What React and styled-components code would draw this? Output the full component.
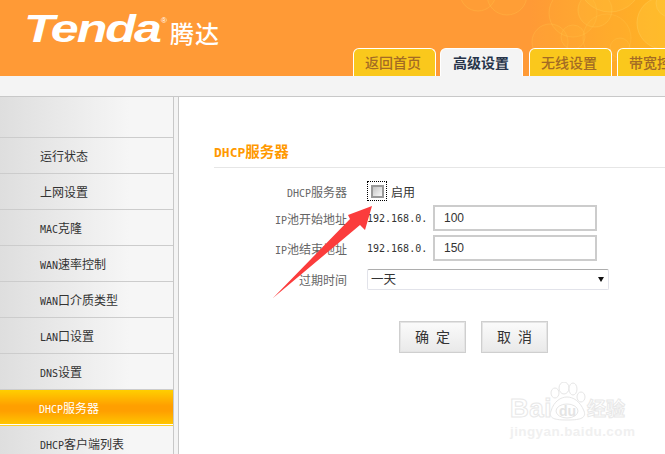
import React from 'react'
import styled, { createGlobalStyle } from 'styled-components'

const CJK = `"Liberation Sans", "Noto Sans CJK SC", sans-serif`

const GlobalStyle = createGlobalStyle`
  html, body {
    margin: 0;
    padding: 0;
    background: #fff;
    overflow: hidden;
  }
  * { box-sizing: border-box; }
`

const Page = styled.div`
  position: relative;
  width: 665px;
  height: 454px;
  overflow: hidden;
  background: #f4f4f4;
  font-family: ${CJK};
  font-size: 12px;
  color: #333;
`

const Header = styled.header`
  position: relative;
  display: flex;
  align-items: flex-end;
  height: 76px;
  padding-left: 353px;
  background: linear-gradient(90deg, #ff9a36 0, #ff9a36 530px, #ffab2a 620px, #ffb522 665px);
`

const Bubbles = styled.svg`
  position: absolute;
  left: 0;
  top: 0;
`

const Logo = styled.div`
  position: absolute;
  left: 24px;
  top: 8px;
  display: flex;
  align-items: flex-start;
  color: #fff;
`

const LogoWord = styled.span`
  display: block;
  width: 137px;
  font: italic bold 38px/42px "Liberation Sans", sans-serif;
  letter-spacing: -1.5px;
  transform: scaleX(1.32);
  transform-origin: left;
`

const LogoMark = styled.span`
  font: 8px/10px "Liberation Sans", sans-serif;
  margin-top: 8px;
`

const LogoCn = styled.span`
  font: 500 24px/28px "Noto Sans CJK SC", sans-serif;
  margin: 11px 0 0 3px;
  letter-spacing: 1px;
`

const Tabs = styled.nav`
  position: relative;
  display: flex;
  gap: 5px;
`

const Tab = styled.a`
  flex: none;
  width: 83px;
  height: 28px;
  margin: ${p => (p.$active ? '0 1px 0 -1px' : '0')};
  padding-left: ${p => (p.$active ? '12px' : '11px')};
  overflow: hidden;
  border: 1px solid #fff;
  border-bottom: 0;
  border-radius: 6px 6px 0 0;
  background: ${p => (p.$active ? '#f4f4f4' : '#fac81c')};
  color: ${p => (p.$active ? '#27344a' : '#a36b24')};
  font: ${p => (p.$active ? 700 : 500)} 14px/26px "Noto Sans CJK SC", sans-serif;
  white-space: nowrap;
`

const Body = styled.div`
  display: flex;
  gap: 4px;
  height: 378px;
  margin-top: 20px;
  border-top: 1px solid #c8c8c8;
`

const Sidebar = styled.aside`
  flex: none;
  width: 174px;
  border-right: 1px solid #c8c8c8;
`

const SideTop = styled.div`
  height: 41px;
  border-bottom: 1px solid #cccccc;
  background: linear-gradient(90deg, #dedede, #f6f6f6 75%);
`

const MenuItem = styled.div`
  height: 36px;
  padding-left: ${p => (p.$active ? '39px' : '40px')};
  border-bottom: 1px solid ${p => (p.$active ? '#ffd02a' : '#cccccc')};
  background: ${p =>
    p.$active
      ? 'linear-gradient(180deg, #ffcf00 0, #ff9f00 45%, #ff9f00 60%, #ffc400 96%, #fff 97%)'
      : 'linear-gradient(90deg, #dedede, #f6f6f6 75%)'};
  color: ${p => (p.$active ? '#fff' : '#333')};
  font-size: 12px;
  line-height: 38px;
  white-space: nowrap;
`

const Latin = styled.span`
  font-family: "DejaVu Sans Mono", monospace;
  font-size: 10px;
`

const Main = styled.main`
  flex: 1;
  padding: 44px 0 0 35px;
  border-left: 1px solid #c8c8c8;
  background: #fff;
`

const Title = styled.h2`
  height: 27px;
  margin: 0 0 13px;
  padding-bottom: 4px;
  border-bottom: 1px solid #e6e6e6;
  color: #ff9900;
  font-size: 14.5px;
  font-weight: 700;
  line-height: 22px;
  white-space: nowrap;
`

const TitleLatin = styled.span`
  font-family: "DejaVu Sans Mono", monospace;
  font-size: 13px;
`

const FormGrid = styled.div`
  display: grid;
  grid-template-columns: 133px 230px;
  grid-template-rows: 20px 26px 26px 29px;
  column-gap: 20px;
  row-gap: 4px;
  align-items: center;
`

const Label = styled.label`
  color: #666;
  text-align: right;
  white-space: nowrap;
`

const Field = styled.div`
  display: flex;
  align-items: center;
  white-space: nowrap;
`

const CheckFrame = styled.span`
  display: flex;
  align-items: center;
  justify-content: center;
  width: 20px;
  height: 20px;
  margin-right: 4px;
  border: 1px dotted #000;
`

const CheckBox = styled.input.attrs({ type: 'checkbox' })`
  appearance: none;
  width: 13px;
  height: 13px;
  margin: 0;
  border: 2px solid #999;
  background: linear-gradient(135deg, #c4c4c4, #fafafa);
`

const IpPrefix = styled.span`
  flex: none;
  width: 66px;
  font-family: "DejaVu Sans Mono", monospace;
  font-size: 10px;
  color: #333;
`

const TextBox = styled.input`
  width: 164px;
  height: 26px;
  padding: 0 9px;
  border: 2px solid #cccccc;
  outline: 0;
  background: #fff;
  color: #333;
  font: 12px "Liberation Sans", sans-serif;
`

const SelectWrap = styled.div`
  position: relative;
  width: 242px;
  height: 21px;
  align-self: center;
`

const Select = styled.select`
  appearance: none;
  display: block;
  width: 100%;
  height: 100%;
  padding: 0 3px;
  border: 1px solid #e2e3ea;
  border-top-color: #adadad;
  border-radius: 2px;
  outline: 0;
  background: #fff;
  color: #333;
  font: 12.5px ${CJK};
`

const Caret = styled.span`
  position: absolute;
  right: 5px;
  top: 8px;
  width: 0;
  height: 0;
  border-style: solid;
  border-width: 5px 3.5px 0;
  border-color: #111 transparent transparent;
  pointer-events: none;
`

const Buttons = styled.div`
  display: flex;
  gap: 15px;
  margin: 27px 0 0 185px;
`

const Button = styled.button`
  width: 67px;
  height: 32px;
  padding: 0 0 3px;
  border: 1px solid #cfcfcf;
  box-shadow: inset 0 0 0 1px #e4e4e4;
  background: linear-gradient(180deg, #fbfbfb, #e9e9e9);
  color: #333;
  font: 14px ${CJK};
  letter-spacing: 7px;
  text-indent: 7px;
`

const ArrowMark = styled.svg`
  position: absolute;
  left: 0;
  top: 0;
  pointer-events: none;
`

const Watermark = styled.div`
  position: absolute;
  left: 510px;
  top: 382px;
  width: 120px;
  height: 60px;
  color: #fff;
  pointer-events: none;
`

const WmPaw = styled.svg`
  position: absolute;
  left: 0;
  top: 0;
`

const WmBai = styled.span`
  position: absolute;
  left: 0;
  top: 11px;
  font: bold 26px/30px "Liberation Sans", sans-serif;
  letter-spacing: 0.5px;
  -webkit-text-stroke: 1px #e8e8e8;
`

const WmDu = styled.span`
  position: absolute;
  left: 49px;
  top: 21px;
  font: bold 14px/16px "Liberation Sans", sans-serif;
  color: #e4e4e4;
`

const WmCn = styled.span`
  position: absolute;
  left: 77px;
  top: 14px;
  font: 700 19px/24px "Noto Sans CJK SC", sans-serif;
  -webkit-text-stroke: 1px #e8e8e8;
`

const WmUrl = styled.span`
  position: absolute;
  left: 0;
  top: 42px;
  font: bold 13.5px/16px "Liberation Sans", sans-serif;
  letter-spacing: 0.4px;
  color: #f0f0f0;
  white-space: nowrap;
`

const bubbles = [
  [478, -7, 18, 0.08], [507, -5, 20, 0.1], [573, 13, 24, 0.1], [595, 10, 17, 0.16],
  [610, -20, 32, 0.22], [550, 42, 18, 0.1], [573, 37, 12, 0.1], [607, 38, 24, 0.07],
  [620, 48, 10, 0.1], [663, 23, 26, 0.35], [670, 3, 14, 0.35]
]

const menu = [
  ['运行状态'],
  ['上网设置'],
  ['MAC', '克隆'],
  ['WAN', '速率控制'],
  ['WAN', '口介质类型'],
  ['LAN', '口设置'],
  ['DNS', '设置'],
  ['DHCP', '服务器'],
  ['DHCP', '客户端列表']
]

const MenuText = ({ parts }) =>
  parts.length === 1 ? parts[0] : <><Latin>{parts[0]}</Latin>{parts[1]}</>

const App = () => {
  return (
    <Page>
      <GlobalStyle />
      <Header>
        <Bubbles width="665" height="76">
          {bubbles.map(([cx, cy, r, o]) => (
            <circle key={`${cx}-${cy}`} cx={cx} cy={cy} r={r} fill="#ffc83c" fillOpacity={o} stroke="#ffc850" strokeOpacity={o + 0.2} />
          ))}
        </Bubbles>
        <Logo>
          <LogoWord>Tenda</LogoWord>
          <LogoMark>®</LogoMark>
          <LogoCn>腾达</LogoCn>
        </Logo>
        <Tabs>
          <Tab>返回首页</Tab>
          <Tab $active>高级设置</Tab>
          <Tab>无线设置</Tab>
          <Tab>带宽控制</Tab>
        </Tabs>
      </Header>
      <Body>
        <Sidebar>
          <SideTop />
          {menu.map((parts, i) => (
            <MenuItem key={i} $active={i === 7}><MenuText parts={parts} /></MenuItem>
          ))}
        </Sidebar>
        <Main>
          <Title><TitleLatin>DHCP</TitleLatin>服务器</Title>
          <FormGrid>
            <Label><Latin>DHCP</Latin>服务器</Label>
            <Field><CheckFrame><CheckBox /></CheckFrame>启用</Field>
            <Label><Latin>IP</Latin>池开始地址</Label>
            <Field><IpPrefix>192.168.0.</IpPrefix><TextBox defaultValue="100" /></Field>
            <Label><Latin>IP</Latin>池结束地址</Label>
            <Field><IpPrefix>192.168.0.</IpPrefix><TextBox defaultValue="150" /></Field>
            <Label>过期时间</Label>
            <SelectWrap>
              <Select defaultValue="1"><option value="1">一天</option></Select>
              <Caret />
            </SelectWrap>
          </FormGrid>
          <Buttons>
            <Button>确定</Button>
            <Button>取消</Button>
          </Buttons>
        </Main>
      </Body>
      <ArrowMark width="665" height="454">
        <polygon points="372,206 365,230 360,225 273,298 350,219 348,215" fill="#fb3c3c" />
      </ArrowMark>
      <Watermark>
        <WmBai>Bai</WmBai>
        <WmPaw width="120" height="60">
          <g fill="#fff" stroke="#e6e6e6">
            <ellipse cx="45" cy="11" rx="4" ry="5" />
            <ellipse cx="54" cy="6" rx="5" ry="6" />
            <ellipse cx="63" cy="7" rx="4" ry="6" />
            <ellipse cx="71" cy="15" rx="4" ry="5" />
            <path d="M41 29c3-10 10-14 16-14s13 4 17 14c3 8-6 9-17 9s-19-1-16-9z" />
            <ellipse cx="57" cy="29" rx="11" ry="7" />
          </g>
        </WmPaw>
        <WmDu>du</WmDu>
        <WmCn>经验</WmCn>
        <WmUrl>jingyan.baidu.com</WmUrl>
      </Watermark>
    </Page>
  )
}

export default App
